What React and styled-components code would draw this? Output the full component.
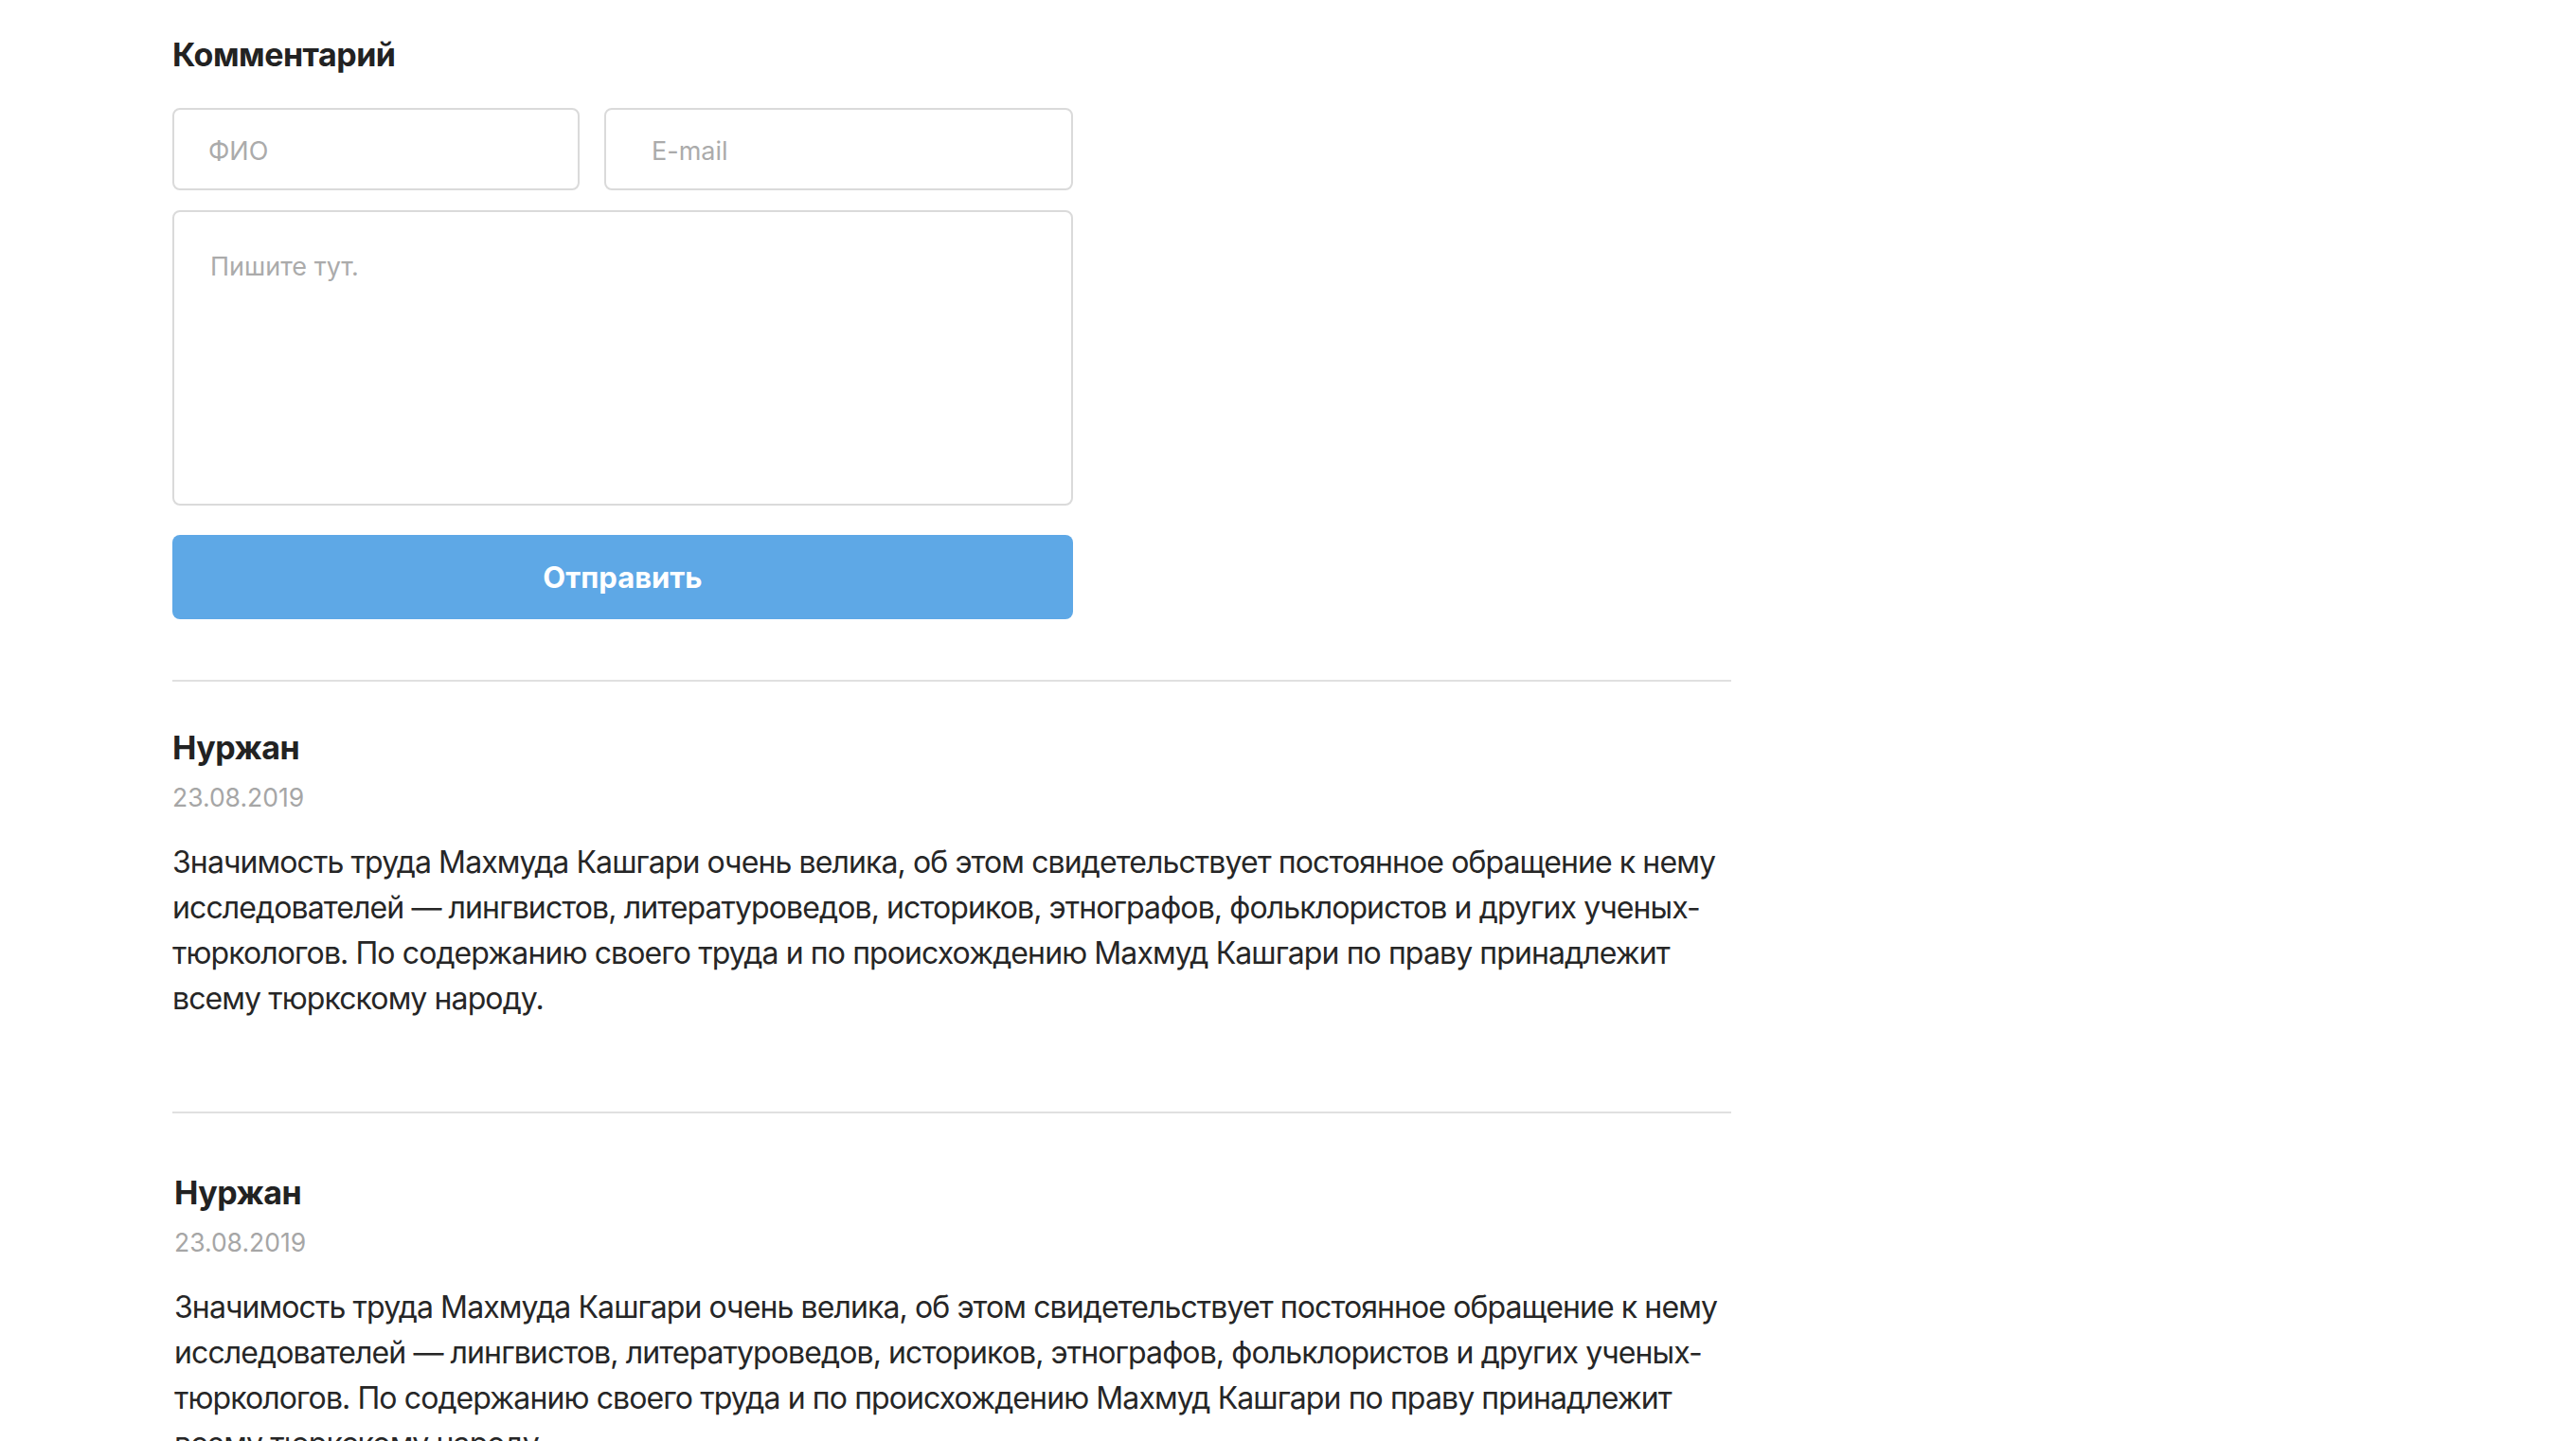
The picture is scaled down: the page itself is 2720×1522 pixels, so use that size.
import styled, { createGlobalStyle } from 'styled-components';

const GlobalStyle = createGlobalStyle`
  body {
    margin: 0;
    background: #ffffff;
    font-family: Inter, "Liberation Sans", sans-serif;
    color: #222222;
  }
`;

const Page = styled.main`
  padding: 36px 0 80px 182px;
  width: 1646px;
`;

const Form = styled.form`
  display: flex;
  flex-direction: column;
  width: 951px;
`;

const Title = styled.h2`
  margin: 0 0 34px;
  font-size: 34px;
  line-height: 44px;
  font-weight: 700;
  letter-spacing: -0.5px;
  color: #222222;
`;

const Row = styled.div`
  display: flex;
  gap: 26px;
`;

const Field = styled.input`
  box-sizing: border-box;
  width: ${(p) => p.$width};
  flex: ${(p) => (p.$grow ? 1 : 'none')};
  height: 87px;
  padding: 4px 0 0 ${(p) => p.$pad}px;
  border: 2px solid #dadada;
  border-radius: 8px;
  font-family: inherit;
  font-size: 27px;
  color: #222222;
  outline: none;

  &::placeholder {
    color: #ababab;
  }
`;

const TextArea = styled.textarea`
  box-sizing: border-box;
  margin-top: 21px;
  height: 312px;
  padding: 39px 38px;
  border: 2px solid #dadada;
  border-radius: 8px;
  font-family: inherit;
  font-size: 27px;
  line-height: 1.4;
  resize: none;
  outline: none;

  &::placeholder {
    color: #ababab;
  }
`;

const SubmitButton = styled.button`
  margin-top: 31px;
  height: 89px;
  border: none;
  border-radius: 8px;
  background: #5ea8e6;
  color: #ffffff;
  font-family: inherit;
  font-size: 31px;
  font-weight: 700;
  cursor: pointer;
`;

const CommentList = styled.section`
  margin-top: 64px;
`;

const Comment = styled.article`
  border-top: 2px solid #e0e0e0;
  padding: ${(p) => p.$top}px 0 95px ${(p) => p.$shift || 0}px;
`;

const Name = styled.h3`
  margin: 0;
  font-size: 34px;
  line-height: 44px;
  font-weight: 700;
  letter-spacing: -0.5px;
  color: #222222;
`;

const DateLine = styled.div`
  margin-top: 12px;
  font-size: 26.5px;
  line-height: 36px;
  color: #a6a6a6;
`;

const Body = styled.p`
  margin: 27px 0 0;
  font-size: 32px;
  line-height: 48px;
  letter-spacing: -0.9px;
  color: #262626;
`;

const text =
  'Значимость труда Махмуда Кашгари очень велика, об этом свидетельствует постоянное обращение к нему исследователей — лингвистов, литературоведов, историков, этнографов, фольклористов и других ученых-тюркологов. По содержанию своего труда и по происхождению Махмуд Кашгари по праву принадлежит всему тюркскому народу.';

const comments = [
  { id: 1, name: 'Нуржан', date: '23.08.2019', top: 48, shift: 0 },
  { id: 2, name: 'Нуржан', date: '23.08.2019', top: 62, shift: 2 },
];

export default function App() {
  return (
    <>
      <GlobalStyle />
      <Page>
        <Form onSubmit={(e) => e.preventDefault()}>
          <Title>Комментарий</Title>
          <Row>
            <Field $width="430px" $pad={36} placeholder="ФИО" />
            <Field $grow $pad={48} placeholder="E-mail" />
          </Row>
          <TextArea placeholder="Пишите тут." />
          <SubmitButton type="submit">Отправить</SubmitButton>
        </Form>
        <CommentList>
          {comments.map((c) => (
            <Comment key={c.id} $top={c.top} $shift={c.shift}>
              <Name>{c.name}</Name>
              <DateLine>{c.date}</DateLine>
              <Body>{text}</Body>
            </Comment>
          ))}
        </CommentList>
      </Page>
    </>
  );
}
